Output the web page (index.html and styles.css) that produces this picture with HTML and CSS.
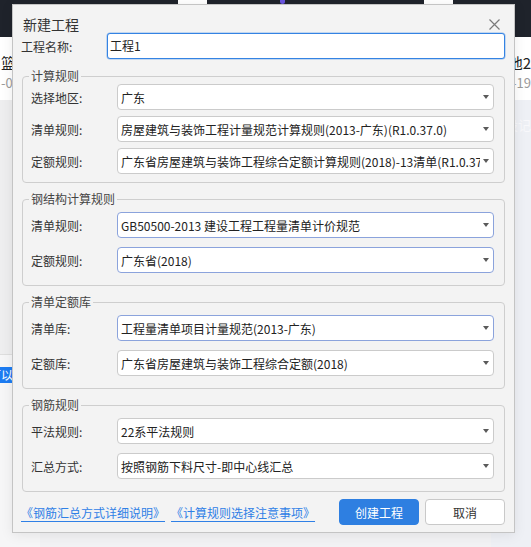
FILE: index.html
```html
<!DOCTYPE html>
<html lang="zh-CN">
<head>
<meta charset="utf-8">
<title>新建工程</title>
<link rel="stylesheet" href="styles.css">
</head>
<body>
<div class="page">
  <div class="topbar">
    <span class="tb-white"></span>
    <span class="tb-dot"></span>
    <span class="tb-white tb-white2"></span>
  </div>
  <div class="cards">
    <div class="card card-left">
      <div class="card-title">篮</div>
      <div class="card-sub">-0</div>
    </div>
    <div class="card card-right">
      <div class="card-title clip-start"><span>篮球场地2</span></div>
      <div class="card-sub clip-start"><span>2023-12-19</span></div>
    </div>
  </div>
  <div class="lower">
    <div class="lower-left">
      <div class="left-panel">
        <div class="tag clip-start"><span>请点击可以</span></div>
      </div>
    </div>
    <div class="lower-right">
      <div class="faint clip-start"><span>建设记</span></div>
    </div>
  </div>
</div>

<div class="dialog">
  <div class="dlg-head">
    <span class="dlg-title">新建工程</span>
    <span class="dlg-close"><svg width="11" height="11" viewBox="0 0 11 11"><path d="M0.5 0.5 L10.5 10.5 M10.5 0.5 L0.5 10.5" stroke="#7a7a7a" stroke-width="1.2" fill="none"/></svg></span>
  </div>
  <div class="name-row">
    <span class="name-label">工程名称:</span>
    <div class="name-input">工程1</div>
  </div>

  <fieldset class="group group-first">
    <legend>计算规则</legend>
    <div class="row"><span class="row-label">选择地区:</span><div class="select"><span class="select-text">广东</span><i class="caret"></i></div></div>
    <div class="row"><span class="row-label">清单规则:</span><div class="select"><span class="select-text">房屋建筑与装饰工程计量规范计算规则(2013-广东)(R1.0.37.0)</span><i class="caret"></i></div></div>
    <div class="row"><span class="row-label">定额规则:</span><div class="select"><span class="select-text">广东省房屋建筑与装饰工程综合定额计算规则(2018)-13清单(R1.0.37.0)</span><i class="caret"></i></div></div>
  </fieldset>

  <fieldset class="group">
    <legend>钢结构计算规则</legend>
    <div class="row"><span class="row-label">清单规则:</span><div class="select select-blue"><span class="select-text">GB50500-2013 建设工程工程量清单计价规范</span><i class="caret"></i></div></div>
    <div class="row"><span class="row-label">定额规则:</span><div class="select select-blue"><span class="select-text">广东省(2018)</span><i class="caret"></i></div></div>
  </fieldset>

  <fieldset class="group">
    <legend>清单定额库</legend>
    <div class="row"><span class="row-label">清单库:</span><div class="select select-blue"><span class="select-text">工程量清单项目计量规范(2013-广东)</span><i class="caret"></i></div></div>
    <div class="row"><span class="row-label">定额库:</span><div class="select"><span class="select-text">广东省房屋建筑与装饰工程综合定额(2018)</span><i class="caret"></i></div></div>
  </fieldset>

  <fieldset class="group">
    <legend>钢筋规则</legend>
    <div class="row"><span class="row-label">平法规则:</span><div class="select"><span class="select-text">22系平法规则</span><i class="caret"></i></div></div>
    <div class="row"><span class="row-label">汇总方式:</span><div class="select"><span class="select-text">按照钢筋下料尺寸-即中心线汇总</span><i class="caret"></i></div></div>
  </fieldset>

  <div class="footer">
    <a class="link" href="#">《钢筋汇总方式详细说明》</a>
    <a class="link" href="#">《计算规则选择注意事项》</a>
    <span class="spacer"></span>
    <button class="btn btn-primary">创建工程</button>
    <button class="btn">取消</button>
  </div>
</div>
</body>
</html>
```

FILE: styles.css
```css
* { box-sizing: border-box; }
html, body { margin: 0; padding: 0; }
body {
  width: 531px;
  height: 547px;
  overflow: hidden;
  position: relative;
  font-family: "Noto Sans CJK SC", "Noto Sans", sans-serif;
  background: #f2f2f4;
  color: #333;
}

/* background page */
.page { width: 531px; height: 547px; display: flex; flex-direction: column; }
.topbar { height: 37px; flex-shrink: 0; background: #1f232b; display: flex; padding-left: 178px; }
.tb-white { width: 29px; background: #fff; }
.tb-dot { width: 5px; height: 4px; margin-left: 73px; background: #6a55e0; border-radius: 0 0 3px 3px; }
.tb-white2 { margin-left: 139px; }

.cards { height: 63px; flex-shrink: 0; background: #fff; display: flex; justify-content: space-between; }
.card { width: 60px; padding-top: 16px; overflow: hidden; }
.card-left { padding-left: 1px; }
.card-title { font-size: 15px; line-height: 20px; color: #222; white-space: nowrap; }
.card-sub { font-size: 13px; line-height: 18px; margin-top: 1px; color: #9a9a9a; white-space: nowrap; }
.clip-start { display: flex; justify-content: flex-end; overflow: hidden; white-space: nowrap; }
.clip-start span { flex-shrink: 0; }

.lower { flex: 1; display: flex; justify-content: space-between; background: #f2f2f4; }
.lower-left { width: 40px; background: #eeeeef; display: flex; flex-direction: column; }
.left-panel { margin-top: 254px; flex: 1; border-top: 1px solid #dedede; background: #f6f6f7; padding-top: 12px; }
.tag { height: 16px; background: #1d7cf2; color: #fff; font-size: 12px; line-height: 16px; width: 13px; }
.lower-right { width: 40px; background: #eef0f5; padding-top: 17px; display: flex; flex-direction: column; align-items: flex-end; }
.faint { font-size: 13px; line-height: 16px; color: #f8f8fb; width: 40px; }

/* dialog */
.dialog {
  position: absolute;
  left: 12px;
  top: 4px;
  width: 503px;
  height: 529px;
  border: 1px solid #c4c4c4;
  background: #f3f3f3;
  padding: 0 9px 7px;
  display: flex;
  flex-direction: column;
  box-shadow: 0 2px 12px rgba(0, 0, 0, 0.08);
}
.dlg-head { height: 28px; padding-top: 10px; display: flex; justify-content: space-between; align-items: center; flex-shrink: 0; }
.dlg-title { font-size: 14px; line-height: 18px; color: #333; margin-left: 1px; }
.dlg-close { width: 11px; height: 11px; margin-right: 5px; display: flex; }

.name-row { height: 26px; display: flex; align-items: center; flex-shrink: 0; }
.name-label { width: 85px; font-size: 12px; color: #333; margin-left: -1px; }
.name-input {
  flex: 1;
  height: 26px;
  margin-left: 1px;
  border: 1px solid #3483e3;
  border-radius: 3px;
  background: #fff;
  padding-left: 2px;
  font-size: 12px;
  line-height: 24px;
  color: #222;
  box-shadow: 0 0 0 0.5px rgba(52, 131, 227, 0.5);
}

.group {
  margin: 8px 0 0;
  padding: 5px 10px 12px 8px;
  border: 1px solid #cecece;
  border-radius: 4px;
  min-width: 0;
  flex-shrink: 0;
}
.group legend { padding: 0 2px; margin-left: -2px; font-size: 12px; line-height: 16px; color: #444; }
.group-first { margin-top: 9px; padding-top: 0; padding-bottom: 8px; }

.row { display: flex; align-items: center; height: 26px; }
.row + .row { margin-top: 9px; }
.group-first .row + .row { margin-top: 6px; }
.row-label { width: 86px; font-size: 12px; color: #333; flex-shrink: 0; }

.select {
  flex: 1;
  min-width: 0;
  height: 26px;
  display: flex;
  align-items: center;
  border: 1px solid #cbcbcb;
  border-radius: 4px;
  background: #fff;
  padding: 0 4px 0 3px;
}
.select-blue { border-color: #8ba3dc; }
.select-text { flex: 1; min-width: 0; overflow: hidden; white-space: nowrap; font-size: 12px; color: #222; }
.caret {
  width: 0;
  height: 0;
  margin-left: 3px;
  border-left: 3px solid transparent;
  border-right: 3px solid transparent;
  border-top: 4px solid #5a5a5a;
  flex-shrink: 0;
}

.footer { margin-top: 7px; height: 26px; display: flex; align-items: center; flex-shrink: 0; }
.link {
  font-size: 12px;
  color: #2f80e6;
  text-decoration: underline;
  text-underline-offset: 3px;
  white-space: nowrap;
}
.link:first-child { margin-left: -1px; }
.link + .link { margin-left: 6px; }
.spacer { flex: 1; }
.btn {
  width: 80px;
  height: 26px;
  border: 1px solid #c9c9c9;
  border-radius: 4px;
  background: #fff;
  color: #333;
  font-family: inherit;
  font-size: 12px;
  padding: 0;
}
.btn + .btn { margin-left: 6px; }
.btn-primary { background: #2e7fe1; border-color: #2e7fe1; color: #fff; }
```
